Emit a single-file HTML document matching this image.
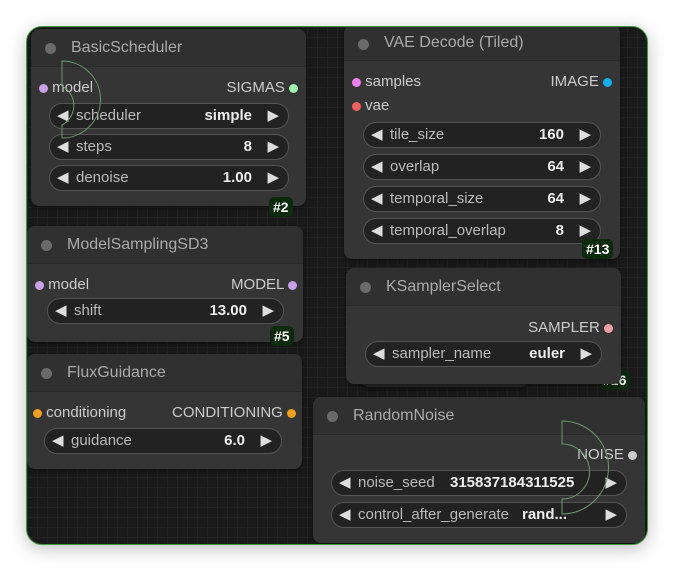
<!DOCTYPE html><html><head><style>
*{margin:0;padding:0;box-sizing:border-box}
body{width:674px;height:571px;background:#fff;position:relative;overflow:hidden;font-family:"Liberation Sans",Arial,sans-serif}
#c{position:absolute;left:26px;top:26px;width:622px;height:519px;border-radius:16px;border:1px solid #3a9a3a;background-color:#1a1a1a;
background-image:linear-gradient(#222 1px,transparent 1px),linear-gradient(90deg,#222 1px,transparent 1px);background-size:10px 10px;overflow:hidden;box-shadow:0 4px 18px rgba(0,0,0,.25)}
.n{position:absolute;background:#353535;border-radius:8px;box-shadow:0 2px 6px rgba(0,0,0,.5)}
.t{height:38px;background:#303030;border-radius:8px 8px 0 0;border-bottom:1px solid #2a2a2a;color:#aaa;font-size:16px;line-height:38px;padding-left:40px;position:relative}
.t:before{content:"";position:absolute;left:14px;top:14px;width:11px;height:11px;border-radius:50%;background:#6a6a6a}
.a{position:absolute;font-size:15px;color:#ccc;white-space:nowrap}
.d{display:inline-block;width:9px;height:9px;border-radius:50%;vertical-align:middle}
.w{position:absolute;height:26px;border-radius:13px;background:#222;border:1px solid #555;color:#ddd;font-size:15px;line-height:24px}
.w .l{position:absolute;left:26px;color:#bbb}.w .v{position:absolute;right:36px;color:#eee;font-weight:bold}
.w:before{content:"◀";position:absolute;left:7px;color:#ddd;font-size:15px}
.w:after{content:"▶";position:absolute;right:9px;color:#ddd;font-size:15px}
.b{position:absolute;background:#0c2a0c;color:#fff;font-weight:bold;font-size:14px;border-radius:5px;padding:2px 4px}
</style></head><body><div id="c">
<div class="n" style="left:4px;top:2px;width:275px;height:177px"><div class="t">BasicScheduler</div>
<div class="a" style="left:8px;top:50px"><span class="d" style="background:#c9a0e8"></span> model</div>
<div class="a" style="right:8px;top:50px">SIGMAS <span class="d" style="background:#a0f0b0"></span></div>
<div class="w" style="left:18px;top:74px;width:240px"><span class="l">scheduler</span><span class="v">simple</span></div>
<div class="w" style="left:18px;top:105px;width:240px"><span class="l">steps</span><span class="v">8</span></div>
<div class="w" style="left:18px;top:136px;width:240px"><span class="l">denoise</span><span class="v">1.00</span></div></div>
<div class="b" style="left:242px;top:170px">#2</div>
<div class="n" style="left:0;top:199px;width:276px;height:116px"><div class="t">ModelSamplingSD3</div>
<div class="a" style="left:8px;top:50px"><span class="d" style="background:#c9a0e8"></span> model</div>
<div class="a" style="right:6px;top:50px">MODEL <span class="d" style="background:#c9a0e8"></span></div>
<div class="w" style="left:20px;top:72px;width:237px"><span class="l">shift</span><span class="v">13.00</span></div></div>
<div class="b" style="left:243px;top:299px">#5</div>
<div class="n" style="left:0;top:327px;width:275px;height:115px"><div class="t">FluxGuidance</div>
<div class="a" style="left:6px;top:50px"><span class="d" style="background:#f0a020"></span> conditioning</div>
<div class="a" style="right:6px;top:50px">CONDITIONING <span class="d" style="background:#f0a020"></span></div>
<div class="w" style="left:17px;top:74px;width:238px"><span class="l">guidance</span><span class="v">6.0</span></div></div>
<div class="n" style="left:317px;top:-2px;width:276px;height:234px"><div class="t" style="height:36px;line-height:36px">VAE Decode (Tiled)</div>
<div class="a" style="left:8px;top:48px"><span class="d" style="background:#f080f0"></span> samples</div>
<div class="a" style="right:8px;top:48px">IMAGE <span class="d" style="background:#10b0f0"></span></div>
<div class="a" style="left:8px;top:72px"><span class="d" style="background:#f06060"></span> vae</div>
<div class="w" style="left:19px;top:97px;width:238px"><span class="l">tile_size</span><span class="v">160</span></div>
<div class="w" style="left:19px;top:129px;width:238px"><span class="l">overlap</span><span class="v">64</span></div>
<div class="w" style="left:19px;top:161px;width:238px"><span class="l">temporal_size</span><span class="v">64</span></div>
<div class="w" style="left:19px;top:193px;width:238px"><span class="l">temporal_overlap</span><span class="v">8</span></div></div>
<div class="b" style="left:555px;top:212px">#13</div>
<div class="n" style="left:334px;top:330px;width:168px;height:30px;background:#2c2c2c"></div>
<div class="b" style="left:572px;top:343px">#16</div>
<div class="n" style="left:319px;top:241px;width:275px;height:116px"><div class="t">KSamplerSelect</div>
<div class="a" style="right:8px;top:51px">SAMPLER <span class="d" style="background:#f0a0a0"></span></div>
<div class="w" style="left:19px;top:73px;width:237px"><span class="l">sampler_name</span><span class="v">euler</span></div></div>
<div class="n" style="left:286px;top:370px;width:332px;height:146px"><div class="t">RandomNoise</div>
<div class="a" style="right:8px;top:49px">NOISE <span class="d" style="background:#ccc"></span></div>
<div class="w" style="left:18px;top:73px;width:296px"><span class="l">noise_seed</span><span class="v" style="left:118px;right:auto">315837184311525</span></div>
<div class="w" style="left:18px;top:105px;width:296px"><span class="l">control_after_generate</span><span class="v" style="left:190px;right:auto">rand...</span></div></div>
</div>
<svg style="position:absolute;left:0;top:0" width="674" height="571" fill="none" stroke="#6a9a6a" stroke-width="1">
<path d="M62 61 A35 35 0 0 1 62 138 L62 125 A22 22 0 0 0 62 86 Z"/>
<path d="M562 421 A35 35 0 0 1 562 514 L562 499 A22 22 0 0 0 562 444 Z"/>
</svg>
</body></html>
